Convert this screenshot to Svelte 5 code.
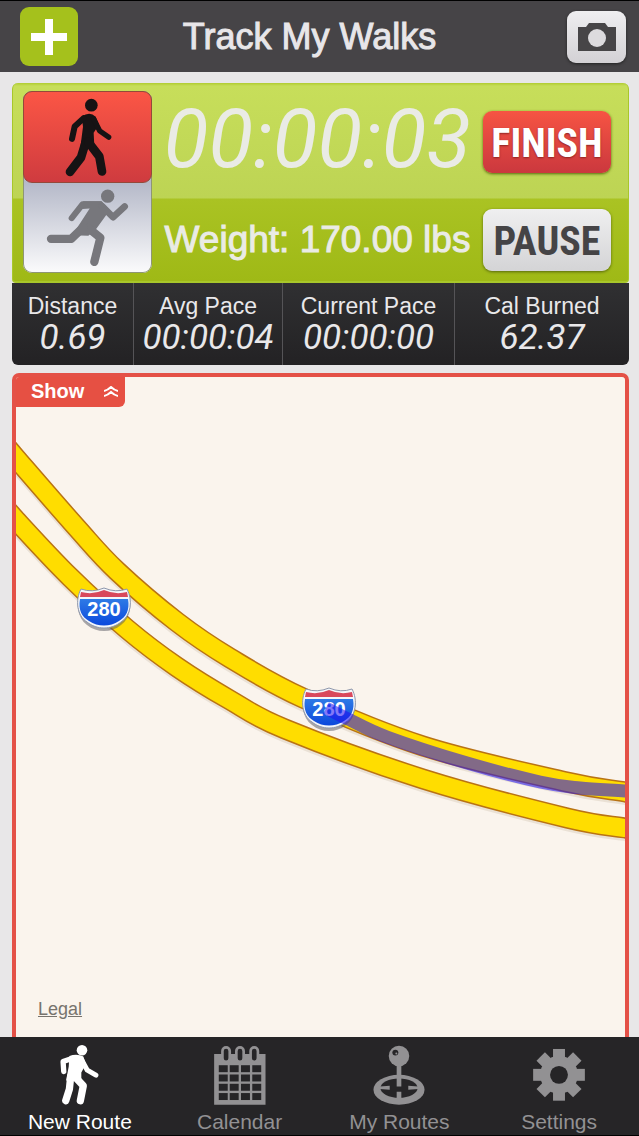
<script lang="ts">
	type Point = [number, number];

	let mode = $state('walk');
	let activeTab = $state('New Route');

	const stats = [
		{ label: 'Distance', value: '0.69' },
		{ label: 'Avg Pace', value: '00:00:04' },
		{ label: 'Current Pace', value: '00:00:00' },
		{ label: 'Cal Burned', value: '62.37' }
	];

	const tabs = ['New Route', 'Calendar', 'My Routes', 'Settings'];

	const northbound: Point[] = [
		[-20, 416], [16, 458], [77, 528], [117, 571], [177, 622], [230, 658], [303, 698],
		[423, 746], [567, 782], [625, 792], [665, 799]
	];
	const southbound: Point[] = [
		[-20, 479], [16, 520], [70, 577], [127, 629], [177, 667], [230, 700], [285, 729],
		[423, 779], [567, 818], [625, 828], [665, 834]
	];
	const track: Point[] = [
		[326, 708], [348, 719], [387, 737], [467, 763], [540, 782], [580, 788], [625, 791], [665, 794]
	];

	const shields: Point[] = [
		[104, 608],
		[329, 708]
	];

	const cellX = [652, 685, 719, 753];
	const cellY = [256, 284, 312, 340];
	const rings = [674, 716, 759];
	const teeth = [0, 45, 90, 135];

	// smooth curve through every point
	function curve(points: Point[]) {
		let d = `M${points[0][0]} ${points[0][1]}`;
		for (let i = 0; i < points.length - 1; i++) {
			const a = points[i - 1] ?? points[i];
			const b = points[i];
			const c = points[i + 1];
			const e = points[i + 2] ?? c;
			d += `C${b[0] + (c[0] - a[0]) / 6} ${b[1] + (c[1] - a[1]) / 6}`;
			d += ` ${c[0] - (e[0] - b[0]) / 6} ${c[1] - (e[1] - b[1]) / 6} ${c[0]} ${c[1]}`;
		}
		return d;
	}
</script>

<div class="app">
	<header class="bar">
		<button class="add" type="button" aria-label="Add">
			<svg viewBox="0 0 36 36" width="36" height="36"><path d="M14 0h8v14h14v8H22v14h-8V22H0v-8h14z" fill="#fff" /></svg>
		</button>
		<h1>Track My Walks</h1>
		<button class="camera" type="button" aria-label="Camera">
			<svg viewBox="0 0 38 28" width="38" height="28">
				<path d="M0 4h8l3-4h16l3 4h8v24H0z" fill="#474547" />
				<circle cx="19" cy="15" r="9" fill="#dddbde" />
			</svg>
		</button>
	</header>

	<main>
		<section class="panel">
			<div class="workout">
				<div class="modes" role="radiogroup" aria-label="Activity">
					<label class="mode" class:mode--on={mode === 'walk'}>
						<input type="radio" name="mode" value="walk" aria-label="Walk" bind:group={mode} />
						<svg class="walker" viewBox="130 30 150 245" width="50" height="82">
							<circle cx="215" cy="57" r="19" />
							<path class="fill" d="M186 92q24-19 42 0l10 24-16 24 2 42-42 2 8-62z" />
							<path d="M192 96 165 121 157 158" stroke-width="18" />
							<path d="M222 98 240 134 267 153" stroke-width="16" />
							<path d="M198 168 184 214 151 257" stroke-width="26" />
							<path d="M206 168 239 211 247 256" stroke-width="26" />
						</svg>
					</label>
					<label class="mode" class:mode--on={mode === 'run'}>
						<input type="radio" name="mode" value="run" aria-label="Run" bind:group={mode} />
						<svg class="runner" viewBox="75 312 255 245" width="85" height="82">
							<circle cx="263" cy="339" r="20" />
							<path class="fill" d="M190 354h55l24 27-40 56-24 21-48-2 52-80-32 2z" />
							<path d="M240 363H188L155 405" stroke-width="18" />
							<path d="M246 369 279 402 314 370" stroke-width="20" />
							<path d="M204 434 241 464 223 536" stroke-width="25" />
							<path d="M190 432 154 467H93" stroke-width="25" />
						</svg>
					</label>
				</div>
				<div class="readout">
					<time class="clock">00:00:03</time>
					<p class="weight">Weight: 170.00 lbs</p>
				</div>
				<div class="actions">
					<button class="action action--finish" type="button">FINISH</button>
					<button class="action" type="button">PAUSE</button>
				</div>
			</div>
			<dl class="stats">
				{#each stats as stat (stat.label)}
					<div class="stat">
						<dt>{stat.label}</dt>
						<dd>{stat.value}</dd>
					</div>
				{/each}
			</dl>
		</section>

		<section class="map">
			<svg class="roads" viewBox="16 377 609 660" preserveAspectRatio="xMidYMid slice">
				<defs>
					<linearGradient id="shield-blue" x1="0" y1="0" x2="0" y2="1">
						<stop offset="0" stop-color="#2e7ae6" />
						<stop offset="1" stop-color="#0b48dc" />
					</linearGradient>
				</defs>
				{#each [southbound, northbound] as road}
					<path class="road road--shadow" d={curve(road)} transform="translate(0 2)" />
					<path class="road road--edge" d={curve(road)} />
					<path class="road road--fill" d={curve(road)} />
				{/each}
				{#each shields as [x, y]}
					<g transform={`translate(${x} ${y})`}>
						<path d="M-23-19Q-12-14 0-19 12-14 23-19C29-8 27 8 17 15 7 23-7 23-17 15-27 8-29-8-23-19z" fill="#55555f" opacity=".5" transform="translate(0 2)" />
						<path d="M-23-19Q-12-15 0-20 12-15 23-19C29-8 27 8 17 14 7 22-7 22-17 14-27 8-29-8-23-19z" fill="#f4f6fa" stroke="#8e97ab" />
						<path d="M-23-16Q-11-13 0-18 11-13 23-16L24-11H-24z" fill="#d9485c" />
						<path d="M-24-9H24C26 2 22 9 15 13 6 19-6 19-15 13-22 9-26 2-24-9z" fill="url(#shield-blue)" />
						<text y="8" text-anchor="middle">280</text>
					</g>
				{/each}
				<path class="track" d={curve(track)} />
			</svg>
			<button class="show" type="button">
				Show
				<svg viewBox="0 0 14 11" width="14" height="11" fill="none" stroke="#fff" stroke-width="2">
					<path d="M0 5Q4 4 7 1q3 3 7 4M0 10q4-1 7-4 3 3 7 4" />
				</svg>
			</button>
			<a class="legal" href="#legal">Legal</a>
		</section>
	</main>

	<nav class="tabs">
		{#each tabs as tab (tab)}
			<button class="tab" class:tab--on={activeTab === tab} type="button" onclick={() => (activeTab = tab)}>
				{#if tab === 'New Route'}
					<svg viewBox="162 192 156 184" width="52" height="61">
						<circle cx="246" cy="211" r="16" fill="currentColor" />
						<path d="M208 228q24-8 42 2l8 22-14 26v26l-46-2 8-42z" fill="currentColor" />
						<g fill="none" stroke="currentColor" stroke-linecap="round" stroke-linejoin="round">
							<path d="M218 235 189 245 191 275" stroke-width="16" />
							<path d="M243 236 262 271 288 286" stroke-width="15" />
							<path d="M212 290 208 328 197 363" stroke-width="22" />
							<path d="M226 292 250 318 241 363" stroke-width="22" />
						</g>
					</svg>
				{:else if tab === 'Calendar'}
					<svg viewBox="638 192 156 184" width="52" height="61">
						<path d="M638 222h155v153H638z" fill="currentColor" />
						{#each rings as x}
							<rect x={x - 11} y="202" width="22" height="44" rx="11" fill="#262527" stroke="currentColor" stroke-width="8" />
						{/each}
						{#each cellY as y}
							{#each cellX as x}
								<rect {x} {y} width="27" height="21" fill="#262527" />
							{/each}
						{/each}
					</svg>
				{:else if tab === 'My Routes'}
					<svg viewBox="158 72 156 184" width="52" height="61">
						<ellipse cx="236" cy="210" rx="77" ry="45" fill="currentColor" />
						<ellipse cx="236" cy="205" rx="56" ry="29" fill="#262527" />
						<path d="M229 130h14v70h-14zM229 216h14v20h-14zM178 200l30-2v12l-30-2zM294 200l-30-2v12l30-2z" fill="currentColor" />
						<circle cx="236" cy="108" r="31" fill="currentColor" />
						<circle cx="225" cy="98" r="9" fill="#262527" />
						<circle cx="228" cy="101" r="3" fill="currentColor" />
					</svg>
				{:else}
					<svg viewBox="639 72 156 184" width="52" height="61">
						<circle cx="717" cy="165" r="57" fill="currentColor" />
						{#each teeth as angle}
							<rect x="699" y="87" width="36" height="156" fill="currentColor" transform={`rotate(${angle} 717 165)`} />
						{/each}
						<circle cx="717" cy="165" r="27" fill="#262527" />
					</svg>
				{/if}
				<span>{tab}</span>
			</button>
		{/each}
	</nav>
</div>

<style>
	:global(body) {
		margin: 0;
		background: #e8e7e8;
	}

	.app {
		min-height: 100vh;
		display: flex;
		flex-direction: column;
		box-sizing: border-box;
		font-family: 'Liberation Sans', Arial, sans-serif;
	}

	button {
		border: 0;
		padding: 0;
		font-family: inherit;
		cursor: pointer;
	}

	svg {
		display: block;
	}

	.bar {
		display: grid;
		grid-template-columns: 58px 1fr 59px;
		align-items: center;
		height: 72px;
		padding: 0 13px 0 20px;
		box-sizing: border-box;
		background: #464447;
		border-top: 1px solid #000;
	}

	.bar h1 {
		margin: 0;
		padding-right: 26px;
		text-align: center;
		font-size: 36px;
		font-weight: 400;
		line-height: 40px;
		color: #e8e6e9;
		-webkit-text-stroke: 1px #e8e6e9;
	}

	.add,
	.camera {
		display: flex;
		align-items: center;
		justify-content: center;
		border-radius: 9px;
	}

	.add {
		height: 59px;
		background: #a5c11c;
	}

	.camera {
		height: 52px;
		background: linear-gradient(#efeef0, #d3d1d5);
		box-shadow: 0 1px 3px #222;
	}

	main {
		flex: 1;
		display: flex;
		flex-direction: column;
		gap: 8px;
		padding: 11px 10px 0 12px;
	}

	.workout {
		display: flex;
		height: 200px;
		box-sizing: border-box;
		padding: 8px 17px 8px 10px;
		border: 1px solid #a8c72a;
		border-width: 0 1px 2px;
		border-radius: 6px 6px 4px 4px;
		background: linear-gradient(#b0cc30 0, #c7de5a 3px, #bdd454 115px, #aac323 116px, #9fb916 100%);
	}

	.modes {
		width: 129px;
		height: 182px;
		border-radius: 9px;
		background: linear-gradient(#b4b8c8 90px, #fbfbfc);
		box-shadow: inset 0 0 0 1px #8e9674;
	}

	.mode {
		display: flex;
		align-items: center;
		justify-content: center;
		height: 90px;
		border-radius: 9px;
		fill: #77777c;
		stroke: #77777c;
		cursor: pointer;
	}

	.mode--on {
		height: 92px;
		box-sizing: border-box;
		border: 1px solid #94493a;
		background: linear-gradient(#fb5645, #cf3b3f);
		fill: #161314;
		stroke: #161314;
	}

	.mode input {
		position: absolute;
		opacity: 0;
	}

	.mode circle,
	.mode .fill {
		stroke: none;
	}

	.mode path:not(.fill) {
		fill: none;
		stroke-linecap: round;
		stroke-linejoin: round;
	}

	.readout {
		flex: 1;
		min-width: 0;
		display: flex;
		flex-direction: column;
		align-items: center;
		color: #eaebe5;
		white-space: nowrap;
	}

	.clock {
		height: 96px;
		font: italic 400 82px/96px Roboto, sans-serif;
	}

	.weight {
		margin: 0;
		padding-top: 30px;
		font-size: 37px;
		line-height: 46px;
		-webkit-text-stroke: 1px #eaebe5;
	}

	.actions {
		display: flex;
		flex-direction: column;
		gap: 36px;
		width: 128px;
		padding-top: 20px;
	}

	.action {
		height: 62px;
		border-radius: 9px;
		background: linear-gradient(#efeff0, #d4d4d6);
		box-shadow: 0 1px 3px #56660c;
		color: #454446;
		font: bold 40px/66px 'Liberation Sans Narrow', 'Roboto Condensed', sans-serif;
	}

	.action--finish {
		background: linear-gradient(#f65443, #cb383e);
		color: #fff;
		text-shadow: 0 1px 2px #8b2422;
	}

	.stats {
		display: grid;
		grid-template-columns: 121fr 149fr 172fr 175fr;
		margin: 0;
		border-radius: 0 0 6px 6px;
		background: linear-gradient(#303032, #232224);
	}

	.stat {
		height: 82px;
		box-sizing: border-box;
		padding-top: 9px;
		text-align: center;
		white-space: nowrap;
		color: #e9e8ea;
	}

	.stat + .stat {
		border-left: 1px solid #555457;
	}

	.stat dt {
		font-size: 23px;
		line-height: 28px;
	}

	.stat dd {
		margin: 0;
		font: italic 400 35px/36px Roboto, sans-serif;
	}

	.map {
		position: relative;
		flex: 1;
		border: 4px solid #e45147;
		border-bottom: 0;
		border-radius: 7px 7px 0 0;
		background: #faf4ed;
		overflow: hidden;
	}

	.roads {
		position: absolute;
		inset: 0;
		width: 100%;
		height: 100%;
	}

	.road {
		fill: none;
	}

	.road--shadow {
		stroke: rgba(120, 90, 40, 0.12);
		stroke-width: 22px;
	}

	.road--edge {
		stroke: #b97314;
		stroke-width: 21px;
	}

	.road--fill {
		stroke: #ffdd00;
		stroke-width: 18px;
	}

	.track {
		fill: none;
		stroke: rgba(32, 16, 240, 0.56);
		stroke-width: 13px;
	}

	.roads text {
		font-size: 20px;
		font-weight: 700;
		fill: #fff;
	}

	.show {
		position: absolute;
		top: -2px;
		left: -2px;
		display: flex;
		align-items: center;
		gap: 20px;
		height: 32px;
		padding: 0 7px 0 17px;
		border-radius: 0 0 6px 0;
		background: #e65043;
		color: #fff;
		font-size: 20px;
		font-weight: 700;
	}

	.legal {
		position: absolute;
		left: 22px;
		bottom: 16px;
		color: #77736d;
		font-size: 18px;
		line-height: 24px;
	}

	.tabs {
		display: grid;
		grid-template-columns: repeat(4, 1fr);
		height: 99px;
		box-sizing: border-box;
		background: #262527;
		border-bottom: 1px solid #000;
	}

	.tab {
		display: flex;
		flex-direction: column;
		align-items: center;
		padding-top: 7px;
		gap: 4px;
		background: none;
		color: #929193;
		font-size: 21px;
		line-height: 26px;
	}

	.tab--on {
		color: #fff;
	}
</style>
